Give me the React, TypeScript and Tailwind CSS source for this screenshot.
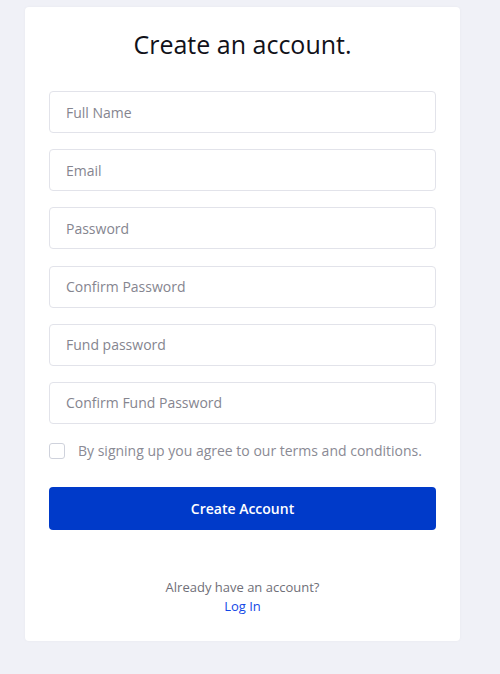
export default function App() {
  const fields = [
    "Full Name",
    "Email",
    "Password",
    "Confirm Password",
    "Fund password",
    "Confirm Fund Password",
  ];
  return (
    <div
      className="min-h-[674px] w-[500px] bg-[#f0f1f7] pt-[7px] pl-[25px]"
      style={{ fontFamily: '"Open Sans", "Noto Sans", sans-serif' }}
    >
      <div className="w-[435px] h-[634px] bg-white rounded-[4px] shadow-[0_0_3px_rgba(0,0,0,0.04)] px-6 pt-[21px]">
        <h1 className="text-center text-[25px] leading-8 font-medium text-[#111119]">
          Create an account.
        </h1>
        <div className="mt-[31px] flex flex-col gap-[16.2px]">
          {fields.map((f) => (
            <input
              key={f}
              placeholder={f}
              className="h-[42px] w-full rounded-[4px] border border-[#e2e3ea] px-4 text-[14px] text-[#333] placeholder:text-[#85858f] outline-none"
            />
          ))}
        </div>
        <label className="mt-[19px] flex items-center h-[16px]">
          <span className="w-4 h-4 rounded-[3px] border border-[#cfd2dc] bg-white shrink-0" />
          <span className="ml-[13px] text-[14px] text-[#8a8a94] whitespace-nowrap">
            By signing up you agree to our terms and conditions.
          </span>
        </label>
        <button className="mt-[28px] w-full h-[43px] rounded-[4px] bg-[#003ac9] text-white text-[14px] font-semibold">
          Create Account
        </button>
        <div className="mt-[48px] text-center text-[13px] leading-[19px] text-[#6f6f78]">
          <div>Already have an account?</div>
          <div className="text-[#1248e6]">Log In</div>
        </div>
      </div>
    </div>
  );
}
